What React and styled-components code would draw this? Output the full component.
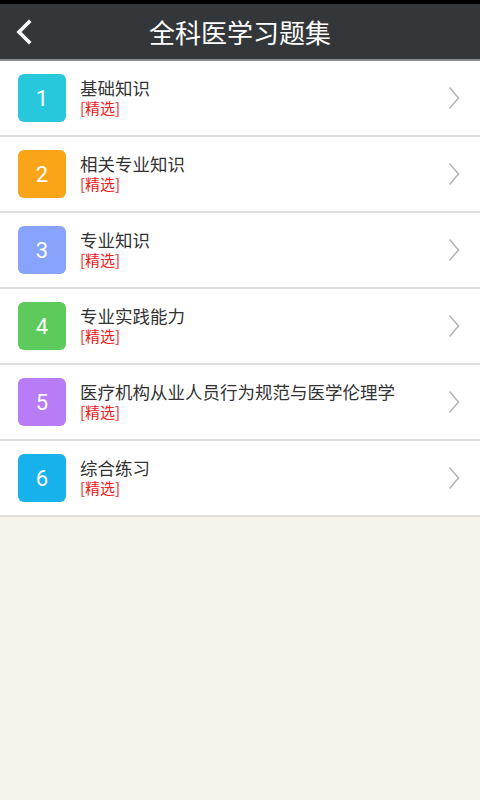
import React from "react";
import styled, { createGlobalStyle } from "styled-components";

const Global = createGlobalStyle`
  html, body { margin: 0; padding: 0; }
  body {
    background: #f6f3ed;
    font-family: "Noto Sans CJK SC", "Noto Sans", sans-serif;
  }
`;

const Page = styled.div`
  width: 480px;
  min-height: 800px;
  background: #f6f3ed;
  display: flex;
  flex-direction: column;
`;

const StatusStrip = styled.div`
  height: 4px;
  background: #000;
`;

const Header = styled.header`
  height: 55px;
  background: #33373a;
  border-bottom: 2px solid #8a8d8f;
  display: grid;
  grid-template-columns: 56px 1fr 56px;
  align-items: center;
`;

const BackButton = styled.button`
  border: 0;
  background: transparent;
  padding: 0 0 0 14px;
  height: 100%;
  display: flex;
  align-items: center;
`;

const Title = styled.h1`
  margin: 0;
  text-align: center;
  color: #fff;
  font-size: 26px;
  font-weight: 400;
  line-height: 1;
`;

const List = styled.ul`
  list-style: none;
  margin: 0;
  padding: 0;
  background: #fff;
`;

const Row = styled.li`
  height: 74px;
  border-bottom: 2px solid #dedede;
  display: flex;
  align-items: center;
  padding: 0 18px;
`;

const Badge = styled.div`
  width: 48px;
  height: 48px;
  border-radius: 6px;
  background: ${(p) => p.$color};
  color: #fff;
  font-family: Roboto, "Noto Sans", sans-serif;
  font-size: 22px;
  display: flex;
  align-items: center;
  justify-content: center;
  flex-shrink: 0;
`;

const Texts = styled.div`
  flex: 1;
  margin-left: 14px;
  display: flex;
  flex-direction: column;
  margin-top: -2px;
`;

const Name = styled.div`
  font-size: 17.5px;
  color: #333;
  line-height: 22px;
`;

const Tag = styled.div`
  font-size: 15px;
  color: #f02020;
  line-height: 18px;
`;

const Chevron = styled.svg`
  width: 12px;
  height: 24px;
  margin-right: 2px;
  flex-shrink: 0;
`;

const items = [
  { n: 1, name: "基础知识", color: "#27c8dc" },
  { n: 2, name: "相关专业知识", color: "#f9a517" },
  { n: 3, name: "专业知识", color: "#87a3fb" },
  { n: 4, name: "专业实践能力", color: "#5ccb5c" },
  { n: 5, name: "医疗机构从业人员行为规范与医学伦理学", color: "#b77cf6" },
  { n: 6, name: "综合练习", color: "#17b2ec" },
];

export default function App() {
  return (
    <Page>
      <Global />
      <StatusStrip />
      <Header>
        <BackButton aria-label="返回">
          <svg width="20" height="28" viewBox="0 0 20 28">
            <path d="M15 4 L5 14 L15 24" fill="none" stroke="#fff" strokeWidth="3.6" strokeLinecap="square" />
          </svg>
        </BackButton>
        <Title>全科医学习题集</Title>
        <div />
      </Header>
      <List>
        {items.map((it) => (
          <Row key={it.n}>
            <Badge $color={it.color}>{it.n}</Badge>
            <Texts>
              <Name>{it.name}</Name>
              <Tag>[精选]</Tag>
            </Texts>
            <Chevron viewBox="0 0 12 24">
              <path d="M1.5 1.5 L10.5 12 L1.5 22.5" fill="none" stroke="#b5b5b5" strokeWidth="1.6" />
            </Chevron>
          </Row>
        ))}
      </List>
    </Page>
  );
}
